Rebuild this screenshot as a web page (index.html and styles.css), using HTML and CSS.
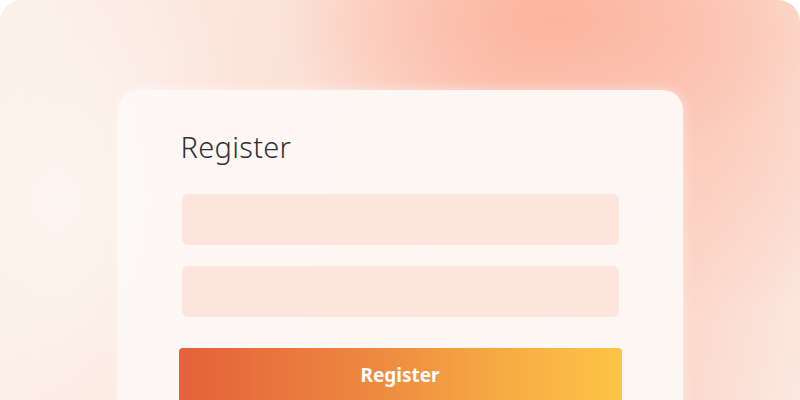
FILE: index.html
```html
<!DOCTYPE html>
<html lang="en">
<head>
    <meta charset="UTF-8">
    <meta name="viewport" content="width=device-width, initial-scale=1.0">
    <title>Register</title>
    <link rel="stylesheet" href="styles.css">
</head>
<body>
    <div class="frame">
        <div class="card">
            <h1 class="title">Register</h1>

            <form class="form">
                <input type="text" class="field" aria-label="Email">
                <input type="password" class="field" aria-label="Password">
                <button type="button" class="submit">Register</button>
            </form>
        </div>
    </div>
</body>
</html>
```

FILE: styles.css
```css
body {
    margin: 0;
    padding: 0;
    background-color: #ffffff;
    font-family: "Noto Sans", Lato, sans-serif;
}

.frame {
    width: 800px;
    height: 400px;
    overflow: hidden;
    border-radius: 22px 22px 0 0;
    background:
        radial-gradient(ellipse 280px 140px at 560px 20px, rgba(252, 178, 156, 0.9), rgba(252, 178, 156, 0) 100%),
        radial-gradient(ellipse 220px 200px at 700px 120px, rgba(251, 196, 178, 0.6), rgba(251, 196, 178, 0) 100%),
        radial-gradient(ellipse 200px 300px at 60px 200px, rgba(253, 246, 241, 0.9), rgba(253, 246, 241, 0) 100%),
        linear-gradient(100deg, #fbefe8 0%, #fbe2d8 35%, #fcc9b8 60%, #fcd8cb 85%, #fbe8e0 100%);
}

.card {
    width: 565px;
    height: 330px;
    margin: 90px auto 0;
    box-sizing: border-box;
    padding: 40px 63px 0;
    background-color: rgba(253, 249, 247, 0.94);
    border-radius: 20px 20px 0 0;
    box-shadow: 0 0 12px rgba(255, 255, 255, 0.5);
}

.title {
    margin: 0 0 30px;
    font-size: 29px;
    font-weight: 300;
    line-height: 34px;
    letter-spacing: 0.3px;
    color: #333030;
}

.form {
    display: flex;
    flex-direction: column;
}

.field {
    height: 51px;
    margin: 0 1px 21px;
    padding: 0 14px;
    border: none;
    border-radius: 6px;
    background-color: #fde4dd;
    font: inherit;
}

.field:last-of-type {
    margin-bottom: 31px;
}

.submit {
    height: 56px;
    margin: 0 -2px;
    padding: 0 0 3px;
    border: none;
    border-radius: 4px;
    background: linear-gradient(90deg, #e4613a 0%, #ee8a40 45%, #f7ad44 75%, #fdc446 100%);
    color: #ffffff;
    font-family: inherit;
    font-size: 19px;
    font-weight: 700;
}
```
